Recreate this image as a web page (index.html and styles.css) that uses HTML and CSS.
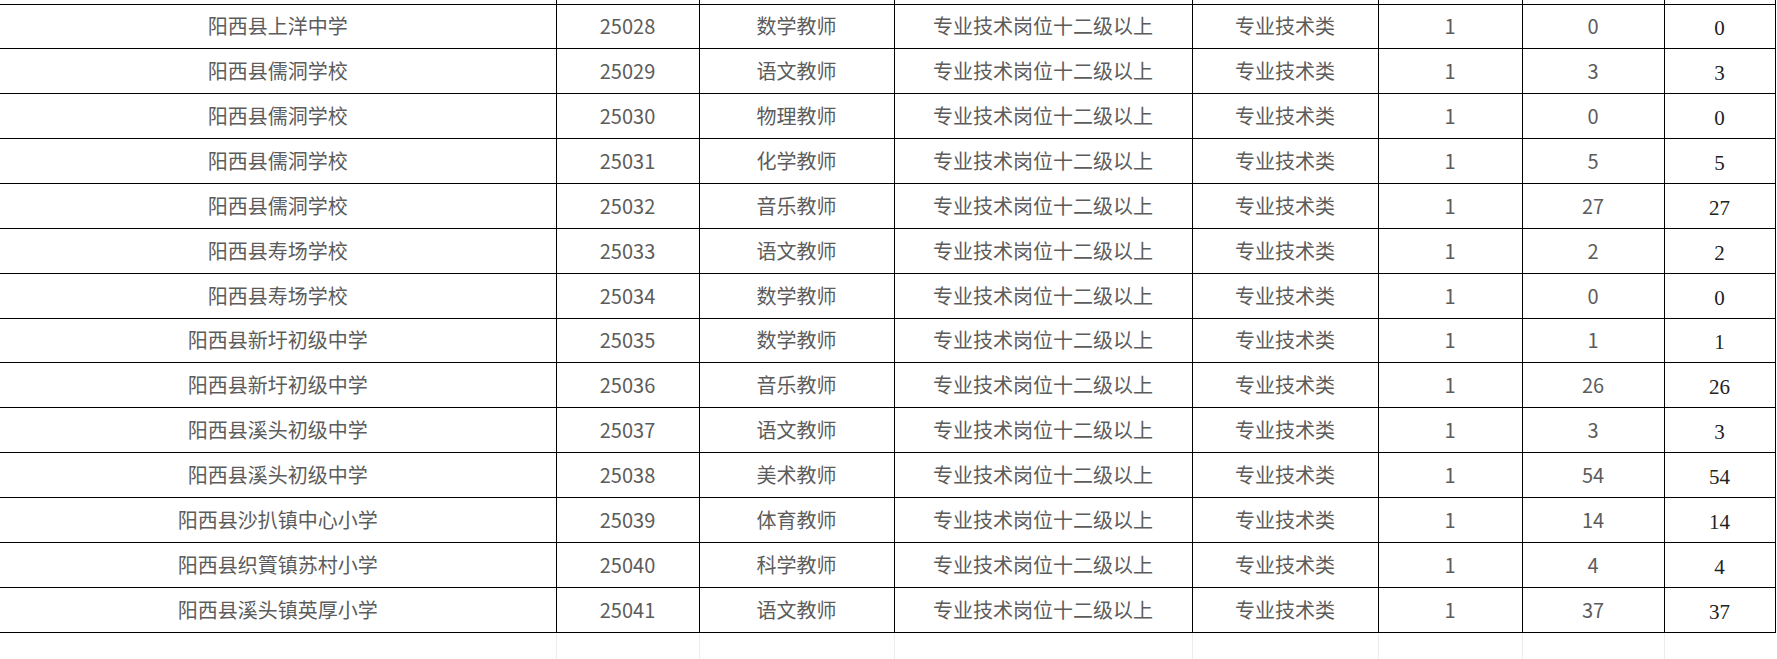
FILE: index.html
```html
<!DOCTYPE html>
<html lang="zh-CN">
<head>
<meta charset="utf-8">
<title>岗位表</title>
<link rel="stylesheet" href="styles.css">
</head>
<body>
<div class="viewport">
<table class="grid">
<colgroup>
<col class="c1"><col class="c2"><col class="c3"><col class="c4"><col class="c5"><col class="c6"><col class="c7"><col class="c8">
</colgroup>
<tbody>
<tr class="cut"><td></td><td></td><td></td><td></td><td></td><td></td><td></td><td></td></tr>
<tr><td>阳西县上洋中学</td><td>25028</td><td>数学教师</td><td>专业技术岗位十二级以上</td><td>专业技术类</td><td>1</td><td>0</td><td class="serif">0</td></tr>
<tr><td>阳西县儒洞学校</td><td>25029</td><td>语文教师</td><td>专业技术岗位十二级以上</td><td>专业技术类</td><td>1</td><td>3</td><td class="serif">3</td></tr>
<tr><td>阳西县儒洞学校</td><td>25030</td><td>物理教师</td><td>专业技术岗位十二级以上</td><td>专业技术类</td><td>1</td><td>0</td><td class="serif">0</td></tr>
<tr><td>阳西县儒洞学校</td><td>25031</td><td>化学教师</td><td>专业技术岗位十二级以上</td><td>专业技术类</td><td>1</td><td>5</td><td class="serif">5</td></tr>
<tr><td>阳西县儒洞学校</td><td>25032</td><td>音乐教师</td><td>专业技术岗位十二级以上</td><td>专业技术类</td><td>1</td><td>27</td><td class="serif">27</td></tr>
<tr><td>阳西县寿场学校</td><td>25033</td><td>语文教师</td><td>专业技术岗位十二级以上</td><td>专业技术类</td><td>1</td><td>2</td><td class="serif">2</td></tr>
<tr><td>阳西县寿场学校</td><td>25034</td><td>数学教师</td><td>专业技术岗位十二级以上</td><td>专业技术类</td><td>1</td><td>0</td><td class="serif">0</td></tr>
<tr><td>阳西县新圩初级中学</td><td>25035</td><td>数学教师</td><td>专业技术岗位十二级以上</td><td>专业技术类</td><td>1</td><td>1</td><td class="serif">1</td></tr>
<tr><td>阳西县新圩初级中学</td><td>25036</td><td>音乐教师</td><td>专业技术岗位十二级以上</td><td>专业技术类</td><td>1</td><td>26</td><td class="serif">26</td></tr>
<tr><td>阳西县溪头初级中学</td><td>25037</td><td>语文教师</td><td>专业技术岗位十二级以上</td><td>专业技术类</td><td>1</td><td>3</td><td class="serif">3</td></tr>
<tr><td>阳西县溪头初级中学</td><td>25038</td><td>美术教师</td><td>专业技术岗位十二级以上</td><td>专业技术类</td><td>1</td><td>54</td><td class="serif">54</td></tr>
<tr><td>阳西县沙扒镇中心小学</td><td>25039</td><td>体育教师</td><td>专业技术岗位十二级以上</td><td>专业技术类</td><td>1</td><td>14</td><td class="serif">14</td></tr>
<tr><td>阳西县织篢镇苏村小学</td><td>25040</td><td>科学教师</td><td>专业技术岗位十二级以上</td><td>专业技术类</td><td>1</td><td>4</td><td class="serif">4</td></tr>
<tr><td>阳西县溪头镇英厚小学</td><td>25041</td><td>语文教师</td><td>专业技术岗位十二级以上</td><td>专业技术类</td><td>1</td><td>37</td><td class="serif">37</td></tr>
<tr class="ghost"><td></td><td></td><td></td><td></td><td></td><td></td><td></td><td></td></tr>
</tbody>
</table>
</div>
</body>
</html>
```

FILE: styles.css
```css
html, body {
  margin: 0;
  padding: 0;
  background: #ffffff;
}

.viewport {
  width: 1777px;
  height: 659px;
  overflow: hidden;
}

.grid {
  border-collapse: collapse;
  table-layout: fixed;
  width: 1775px;
  font-family: "Noto Sans CJK SC", "Noto Sans", sans-serif;
  font-size: 20px;
  color: #5c5c5c;
}

.c1 { width: 556px; }
.c2 { width: 143px; }
.c3 { width: 195px; }
.c4 { width: 298px; }
.c5 { width: 186px; }
.c6 { width: 144px; }
.c7 { width: 142px; }
.c8 { width: 111px; }

.grid td {
  box-sizing: border-box;
  border: 1px solid #000000;
  height: 44.86px;
  padding: 0;
  text-align: center;
  vertical-align: middle;
  line-height: 1;
  white-space: nowrap;
  overflow: hidden;
}

.grid td:first-child {
  border-left: none;
}

.grid tr.cut td {
  height: 4px;
  border-top: none;
}

.grid td.serif {
  font-family: "Liberation Serif", "DejaVu Serif", serif;
  font-size: 21px;
  color: #222222;
  padding-top: 5px;
}

.grid tr.ghost td {
  height: 30px;
  border-left: 1px solid #ececec;
  border-right: 1px solid #ececec;
  border-bottom: none;
}

.grid tr.ghost td:first-child {
  border-left: none;
}

.grid tr.ghost td:last-child {
  border-right: none;
}
```
